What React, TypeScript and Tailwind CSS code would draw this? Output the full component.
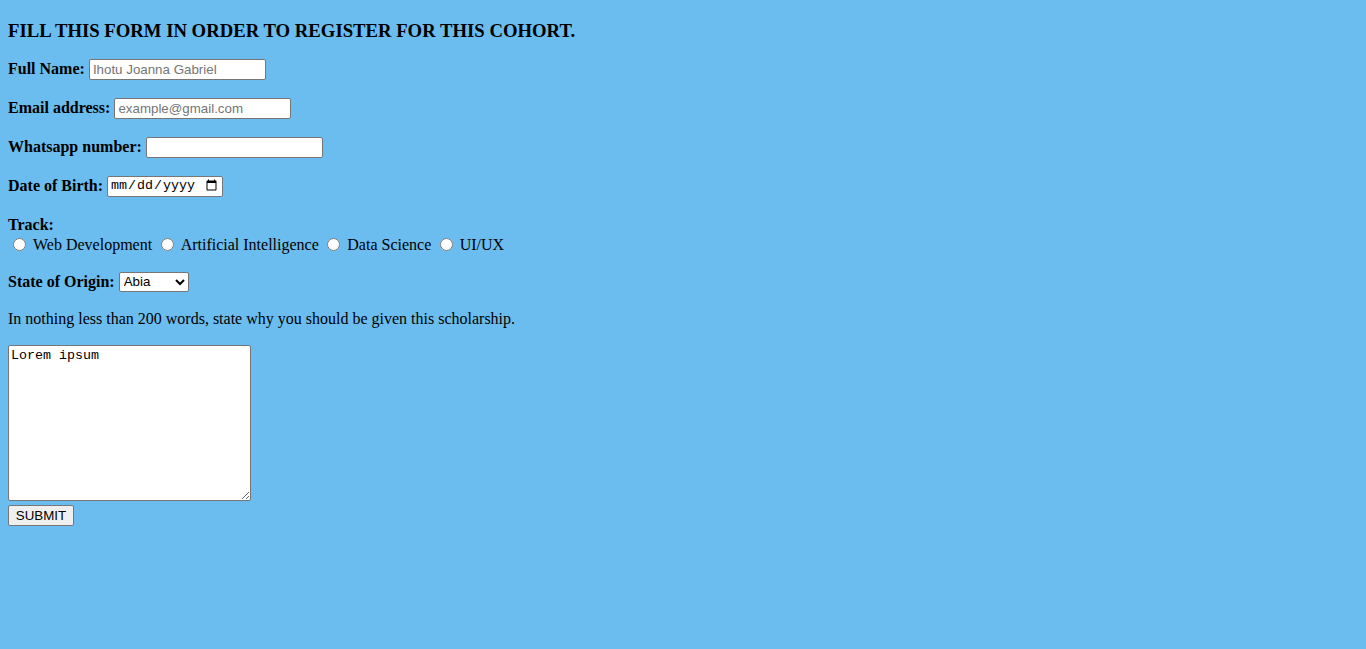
const serif = "font-['Liberation_Serif','Times_New_Roman',serif]";
const inputCls =
  "h-[21px] w-[177px] border border-[#767676] bg-white px-[3px] text-[13.33px] text-black font-['Liberation_Sans',Arial,sans-serif] placeholder:text-[#757575] outline-none rounded-[2px]";

const tracks = ["Web Development", "Artificial Intelligence", "Data Science", "UI/UX"];

export default function App() {
  return (
    <div className={`min-h-screen w-full bg-[#6bbdf0] text-black ${serif}`}>
      <div className="px-2 pt-[20px]">
        <h3 className="text-[18.72px] leading-[21.5px] font-bold">
          FILL THIS FORM IN ORDER TO REGISTER FOR THIS COHORT.
        </h3>

        <form className="text-[16px]">
          <div className="mt-[16px] flex h-[23px] items-center gap-[4px]">
            <label className="font-bold">Full Name:</label>
            <input type="text" placeholder="Ihotu Joanna Gabriel" className={inputCls} />
          </div>
          <div className="mt-4 flex h-[23px] items-center gap-[4px]">
            <label className="font-bold">Email address:</label>
            <input type="email" placeholder="example@gmail.com" className={inputCls} />
          </div>
          <div className="mt-4 flex h-[23px] items-center gap-[4px]">
            <label className="font-bold">Whatsapp number:</label>
            <input type="tel" className={inputCls} />
          </div>
          <div className="mt-4 flex h-[23px] items-center gap-[4px]">
            <label className="font-bold">Date of Birth:</label>
            <input
              type="date"
              className="h-[21px] w-[116px] border border-[#767676] bg-white px-[2px] text-[13.33px] font-['Liberation_Mono',monospace] rounded-[2px] outline-none"
            />
          </div>

          <div className="mt-[17px]">
            <div className="h-[20px] leading-[20px] font-bold">Track:</div>
            <div className="flex h-[20px] items-center">
              {tracks.map((t) => (
                <label key={t} className="flex items-center">
                  <input type="radio" name="track" className="ml-[5px] mr-[3px] h-[13px] w-[13px]" />
                  <span className="mr-[3.5px] pl-[4px]">{t}</span>
                </label>
              ))}
            </div>
          </div>

          <div className="mt-[15.5px] flex h-[23px] items-center gap-[4px]">
            <label className="font-bold">State of Origin:</label>
            <select className="h-[20px] w-[70px] border border-[#767676] bg-white text-[13.33px] font-['Liberation_Sans',Arial,sans-serif] rounded-[2px]">
              <option>Abia</option>
              <option>Adamawa</option>
              <option>Akwa Ibom</option>
            </select>
          </div>

          <p className="mt-[16.5px] h-[18px] leading-[18px]">
            In nothing less than 200 words, state why you should be given this scholarship.
          </p>

          <textarea
            defaultValue="Lorem ipsum"
            className="mt-[17px] block h-[156px] w-[243px] border border-[#767676] bg-white p-[2px] text-[13.33px] leading-[16px] font-['Liberation_Mono','DejaVu_Sans_Mono',monospace] rounded-[2px] outline-none"
          />
          <button
            type="button"
            className="mt-[4px] block h-[21px] w-[66px] border border-[#767676] bg-[#efefef] text-[13.33px] leading-[19px] font-['Liberation_Sans',Arial,sans-serif] rounded-[2px]"
          >
            SUBMIT
          </button>
        </form>
      </div>
    </div>
  );
}
